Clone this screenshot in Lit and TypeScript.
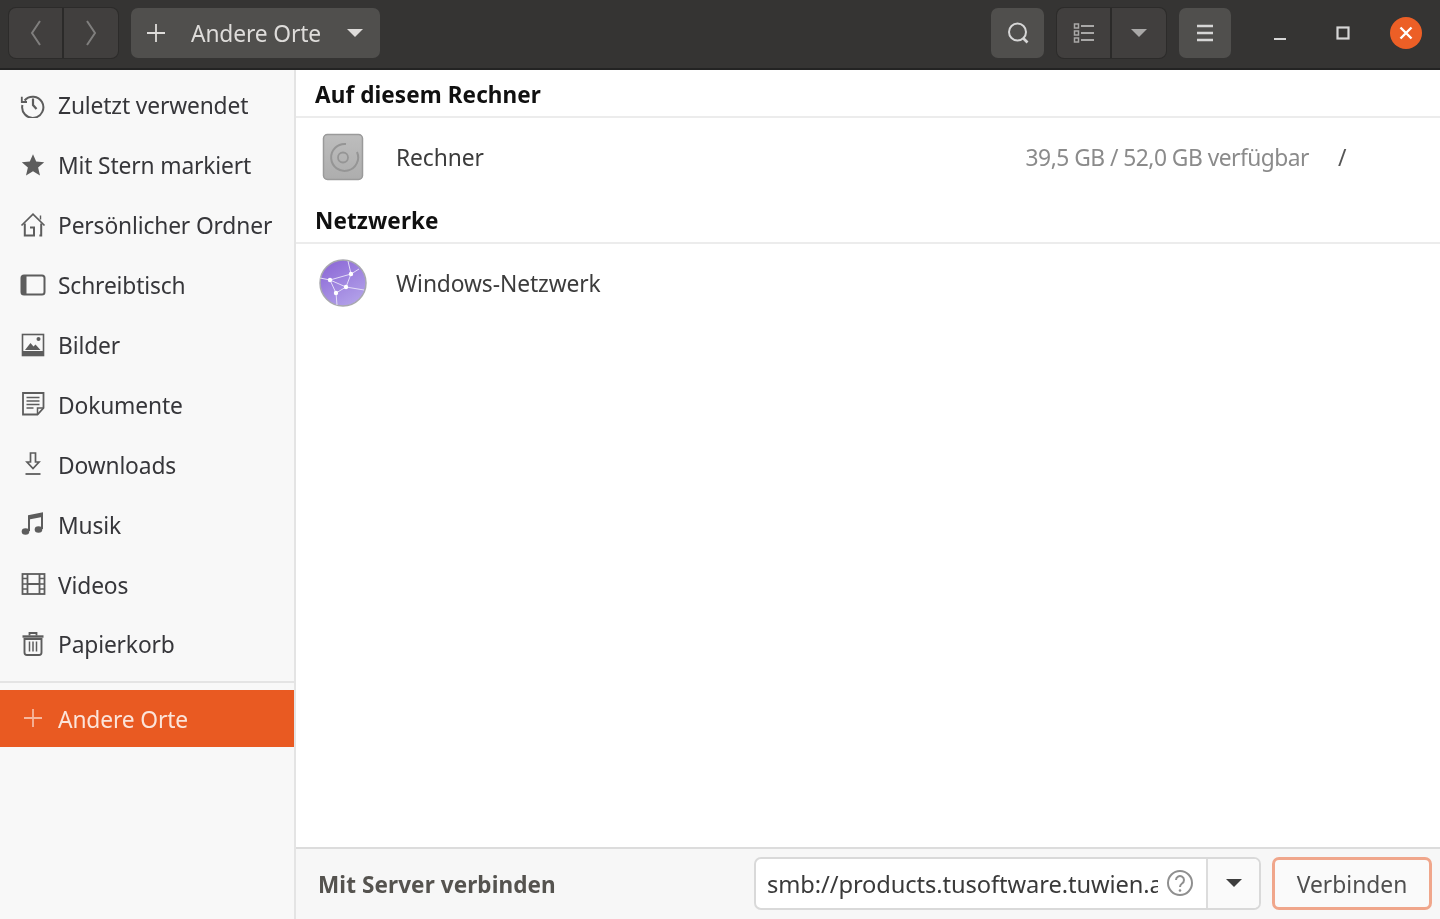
import { LitElement, html, css, svg } from "lit";
import { customElement } from "lit/decorators.js";

const ic = (body: unknown, cls = "") => html`<svg class="ic ${cls}" viewBox="0 0 26 26" fill="none" stroke="currentColor" stroke-width="2">${body}</svg>`;

const icons: Record<string, unknown> = {
  recent: svg`<path d="M4.6 8.500A10.600 10.600 0 1 1 2.400 13" /><path d="M1.800 4.800v5.200h5.200" stroke-width="1.800"/><path d="M13 6.500V13l3.500 4" stroke-width="2.200"/>`,
  star: svg`<path fill="currentColor" stroke="none" d="M13 2.200l3.200 7.400 8 .7-6.100 5.300 1.900 7.900L13 19.300l-7 4.200 1.900-7.900-6.100-5.300 8-.7z"/>`,
  home: svg`<path d="M1.500 13.500L13 2.200l11.500 11.300" stroke-width="1.700"/><path d="M4.800 11.500V23.500H14v-8h-4" stroke-width="2"/><path d="M21.200 11.500V23.500h-1.800" stroke-width="2"/><path d="M20.500 3.500v4" stroke-width="1.400"/>`,
  desktop: svg`<rect x="1.500" y="3.500" width="23" height="19" rx="2.500" stroke-width="2"/><path fill="currentColor" stroke="none" d="M1.500 6a2.500 2.500 0 0 1 2.500-2.500h2.500v19H4A2.500 2.500 0 0 1 1.500 20z"/>`,
  pictures: svg`<rect x="2.500" y="2.500" width="21" height="21" stroke-width="1.600"/><path fill="currentColor" stroke="none" d="M2 19h22V24H2z"/><path fill="currentColor" stroke="none" d="M5 18l5.500-7 3 3.500 2-2 5 5.500z"/><circle cx="18.500" cy="7" r="2" fill="currentColor" stroke="none"/>`,
  docs: svg`<path d="M3 2h20.500v15l-6 6.500H3z" stroke-width="1.800"/><path d="M17.500 23.500V17h6" stroke-width="1.500"/><path d="M6.500 6.500h13M6.500 10h13M6.500 13.500h13M6.500 17h7" stroke-width="1.500"/>`,
  downloads: svg`<path d="M10.500 2h5v9h3.500l-6 6.500-6-6.500h3.500z" stroke-width="1.700"/><path d="M5.500 23h15" stroke-width="1.800"/>`,
  music: svg`<path d="M9 20V5l13-2.500v15.500" stroke-width="2"/><path d="M9 5l13-2.500v3.500L9 8.500z" fill="currentColor" stroke="none"/><ellipse cx="5.500" cy="20.500" rx="3.800" ry="3.300" fill="currentColor" stroke="none"/><ellipse cx="18.500" cy="18.500" rx="3.800" ry="3.300" fill="currentColor" stroke="none"/>`,
  videos: svg`<rect x="2.500" y="3" width="22" height="20" stroke-width="1.800"/><path d="M7.500 3v20M19.500 3v20M7.500 13H19.500" stroke-width="1.800"/><path d="M2.500 7.500h5M2.500 13h5M2.500 18h5M19.500 7.500h5M19.500 13h5M19.500 18h5" stroke-width="1.700"/>`,
  trash: svg`<path d="M4.500 8h17V21.500a2.500 2.500 0 0 1-2.500 2.500H7a2.500 2.500 0 0 1-2.500-2.500z" stroke-width="1.900"/><path d="M2.500 5.500h21" stroke-width="2.400"/><path d="M9.500 4.500V2h7v2.500" stroke-width="1.800"/><path d="M9.500 10.500v10M13 10.500v10M16.500 10.500v10" stroke-width="1.500"/>`,
  plus: svg`<path d="M13 4v18M4 13h18" stroke-width="1.800"/>`,
};

const places = [
  ["recent", "Zuletzt verwendet"],
  ["star", "Mit Stern markiert"],
  ["home", "Persönlicher Ordner"],
  ["desktop", "Schreibtisch"],
  ["pictures", "Bilder"],
  ["docs", "Dokumente"],
  ["downloads", "Downloads"],
  ["music", "Musik"],
  ["videos", "Videos"],
  ["trash", "Papierkorb"],
];

@customElement("app-root")
export class AppRoot extends LitElement {
  static styles = css`
    :host {
      display: flex;
      flex-direction: column;
      width: 1440px;
      height: 919px;
      overflow: hidden;
      font-family: "Noto Sans", "Open Sans", sans-serif;
      font-size: 22.8px;
      color: #3d3d3d;
      background: #fff;
      filter: blur(0.45px);
    }
    .ic { width: 26px; height: 26px; flex: none; display: block; }

    .header {
      height: 70px;
      flex: none;
      box-sizing: border-box;
      display: flex;
      align-items: center;
      padding: 0 0 2px 9px;
      background: #353433;
      border-bottom: 2px solid #232323;
      color: #d6d6d6;
    }
    .group {
      display: flex;
      height: 50px;
      border-radius: 7px;
      background: #413f3e;
      box-shadow: 0 0 0 1px #2c2b2a;
      overflow: hidden;
    }
    .group > div { display: flex; align-items: center; justify-content: center; box-sizing: border-box; width: 54px; }
    .group > div:first-child { width: 55px; border-right: 2px solid #2b2a29; }
    .nav svg { width: 14px; height: 30px; color: #7f7e7d; }
    .path {
      margin-left: 13px;
      width: 249px;
      height: 50px;
      box-sizing: border-box;
      border-radius: 7px;
      background: #504f4d;
      display: flex;
      align-items: center;
      padding: 0 17px 0 12px;
      color: #dedcda;
    }
    .path .label { margin-left: 22px; flex: 1; letter-spacing: -0.15px; }
    .tri { width: 0; height: 0; border-left: 8px solid transparent; border-right: 8px solid transparent; border-top: 8px solid currentColor; flex: none; }
    .spacer { flex: 1; }
    .tool {
      width: 53px;
      height: 50px;
      border-radius: 7px;
      background: #504f4d;
      display: flex;
      align-items: center;
      justify-content: center;
    }
    .tool.menu { width: 52px; }
    .view { margin: 0 13px; }
    .view .list { color: #a9a8a7; }
    .view .tri { color: #a9a8a7; }
    .tool svg, .view svg { width: 26px; height: 26px; }
    .win { display: flex; align-items: center; margin-left: 17px; padding-right: 3px; }
    .win > div { width: 63px; height: 50px; display: flex; align-items: center; justify-content: center; }
    .close-dot {
      width: 32px;
      height: 32px;
      border-radius: 50%;
      background: #ec5f26;
      display: flex;
      align-items: center;
      justify-content: center;
      color: #fff;
    }
    .close-dot svg { width: 16px; height: 16px; }

    .body { flex: 1; display: flex; min-height: 0; }

    .sidebar {
      width: 296px;
      flex: none;
      box-sizing: border-box;
      background: #f8f8f8;
      border-right: 2px solid #e4e4e4;
      display: flex;
      flex-direction: column;
      padding-top: 5px;
    }
    .row {
      height: 59.900px;
      flex: none;
      display: flex;
      align-items: center;
      padding-left: 20px;
      gap: 12px;
      color: #36363a;
      letter-spacing: -0.15px;
    }
    .row > span { padding-top: 2px; }
    .row .ic { color: #5d5d5d; }
    .sep { height: 2px; background: #e4e4e4; margin-top: 7px; flex: none; }
    .row.active {
      margin-top: 7px;
      height: 57px;
      background: #e95a22;
      color: #fbe4da;
    }
    .row.active .ic { color: #f6b79e; }

    .main { flex: 1; display: flex; flex-direction: column; min-width: 0; background: #fff; }
    .section {
      height: 48px;
      flex: none;
      box-sizing: border-box;
      display: flex;
      align-items: center;
      padding: 2px 0 0 19px;
      font-size: 22.500px;
      font-weight: 700;
      color: #101010;
      border-bottom: 2px solid #ececec;
      letter-spacing: 0.1px;
    }
    .place {
      height: 78px;
      flex: none;
      display: flex;
      align-items: center;
      padding-left: 23px;
      color: #3c3c3c;
    }
    .place svg { width: 48px; height: 48px; flex: none; }
    .place .name { margin-left: 29px; flex: 1; letter-spacing: -0.1px; }
    .place .free { color: #8b8b8b; letter-spacing: -0.52px; }
    .place .mount { color: #555; width: 131px; padding-left: 29px; box-sizing: border-box; }
    .fill { flex: 1; }

    .connect {
      height: 72px;
      flex: none;
      box-sizing: border-box;
      background: #f7f7f7;
      border-top: 2px solid #dcdcdc;
      display: flex;
      align-items: center;
      padding: 0 8px 2px 22px;
    }
    .connect .title { padding-top: 2px; font-size: 22.500px; font-weight: 700; color: #55534f; flex: 1; letter-spacing: 0.1px; }
    .entry {
      width: 507px;
      height: 53px;
      box-sizing: border-box;
      display: flex;
      border: 2px solid #d9d9d9;
      border-radius: 7px;
      background: #fff;
      overflow: hidden;
    }
    .entry .text {
      flex: 1;
      min-width: 0;
      display: flex;
      align-items: center;
      padding-left: 11px;
      color: #3a3a3a;
    }
    .entry .val { padding-top: 2px; width: 391px; overflow: hidden; white-space: nowrap; flex: none; font-size: 23.700px; letter-spacing: -0.1px; }
    .entry svg { margin-left: 8px; width: 28px; height: 28px; color: #8f8f8f; flex: none; }
    .entry .drop {
      width: 53px;
      flex: none;
      box-sizing: border-box;
      background: #fafafa;
      border-left: 2px solid #dcdcdc;
      display: flex;
      align-items: center;
      justify-content: center;
      color: #3d3d3d;
    }
    .btn {
      margin-left: 11px;
      width: 160px;
      height: 53px;
      box-sizing: border-box;
      border: 3px solid #f0a68b;
      border-radius: 7px;
      padding-top: 2px;
      background: #fafafa;
      display: flex;
      align-items: center;
      justify-content: center;
      color: #4f4f4f;
    }
  `;

  render() {
    return html`
      <div class="header">
        <div class="group nav">
          <div><svg viewBox="0 0 14 30" fill="none" stroke="currentColor" stroke-width="2"><path d="M11 3L3 15l8 12"/></svg></div>
          <div><svg viewBox="0 0 14 30" fill="none" stroke="currentColor" stroke-width="2"><path d="M3 3l8 12-8 12"/></svg></div>
        </div>
        <div class="path">
          ${ic(icons.plus)}
          <span class="label">Andere Orte</span>
          <span class="tri"></span>
        </div>
        <div class="spacer"></div>
        <div class="tool">
          <svg viewBox="0 0 26 26" fill="none" stroke="currentColor" stroke-width="2"><circle cx="12.500" cy="12" r="8.500"/><path d="M18.500 18.500l4 4" stroke-width="2.600"/></svg>
        </div>
        <div class="group view">
          <div class="list"><svg viewBox="0 0 26 26" fill="none" stroke="currentColor" stroke-width="1.800"><path d="M3.500 4h4v4h-4zM3.500 11h4v4h-4zM3.500 18h4v4h-4z" stroke-width="1.500"/><path d="M10 6H23M10 13H23M10 20H23"/></svg></div>
          <div><span class="tri"></span></div>
        </div>
        <div class="tool menu">
          <svg viewBox="0 0 26 26" fill="none" stroke="currentColor" stroke-width="2.400"><path d="M5 6h16M5 13h16M5 20h16"/></svg>
        </div>
        <div class="win">
          <div><svg class="ic" viewBox="0 0 26 26" fill="none" stroke="currentColor" stroke-width="2"><path d="M7 19h12"/></svg></div>
          <div><svg class="ic" viewBox="0 0 26 26" fill="none" stroke="currentColor" stroke-width="2.200"><rect x="7.500" y="7.500" width="11" height="11"/></svg></div>
          <div><span class="close-dot"><svg viewBox="0 0 16 16" fill="none" stroke="currentColor" stroke-width="2.400"><path d="M2.500 2.500l11 11M13.500 2.500l-11 11"/></svg></span></div>
        </div>
      </div>
      <div class="body">
        <div class="sidebar">
          ${places.map(([i, t]) => html`<div class="row">${ic(icons[i])}<span>${t}</span></div>`)}
          <div class="sep"></div>
          <div class="row active">${ic(icons.plus)}<span>Andere Orte</span></div>
        </div>
        <div class="main">
          <div class="section">Auf diesem Rechner</div>
          <div class="place">
            <svg viewBox="0 0 48 48">
              <defs><linearGradient id="d" x1="0" y1="0" x2="0" y2="1"><stop offset="0" stop-color="#bdbdbd"/><stop offset="1" stop-color="#adadad"/></linearGradient></defs>
              <rect x="4.500" y="1.500" width="39" height="45" rx="4" fill="url(#d)" stroke="#9a9a9a" stroke-width="1.500"/>
              <path d="M27 11a13.500 13.500 0 1 0 11 8" fill="none" stroke="#959595" stroke-width="2"/>
              <circle cx="24" cy="24.500" r="5" fill="none" stroke="#959595" stroke-width="1.800"/>
            </svg>
            <span class="name">Rechner</span>
            <span class="free">39,5 GB / 52,0 GB verfügbar</span>
            <span class="mount">/</span>
          </div>
          <div class="section">Netzwerke</div>
          <div class="place">
            <svg viewBox="0 0 48 48">
              <defs><linearGradient id="g" x1="0.200" y1="0" x2="0.800" y2="1"><stop offset="0" stop-color="#8c68d6"/><stop offset="1" stop-color="#b4a4ea"/></linearGradient></defs>
              <circle cx="24" cy="24" r="23" fill="url(#g)" stroke="#a8a8ae" stroke-width="1.500"/>
              <g fill="none" stroke="#e4ddf7" stroke-width="1">
                <path d="M11 21l21-6M11 21l16 7M32 15l-5 13M27 28l-10 6M11 21l6 13M32 15l8-5M27 28l18 3M17 34l1 12M11 21l-10-2M32 15l-3-13"/>
              </g>
              <g fill="#fff"><circle cx="32" cy="15" r="2.200"/><circle cx="11" cy="21" r="2.200"/><circle cx="27" cy="28" r="2.200"/><circle cx="17" cy="34" r="2.200"/></g>
            </svg>
            <span class="name">Windows-Netzwerk</span>
          </div>
          <div class="fill"></div>
          <div class="connect">
            <span class="title">Mit Server verbinden</span>
            <div class="entry">
              <div class="text">
                <span class="val">smb://products.tusoftware.tuwien.ac.at</span>
                <svg viewBox="0 0 28 28" fill="none" stroke="currentColor" stroke-width="2"><circle cx="14" cy="14" r="12"/><path d="M10 11a4 4 0 1 1 6 3.500c-1.500 1-2 1.500-2 3.500" /><circle cx="14" cy="21.500" r="1.300" fill="currentColor" stroke="none"/></svg>
              </div>
              <div class="drop"><span class="tri"></span></div>
            </div>
            <div class="btn">Verbinden</div>
          </div>
        </div>
      </div>
    `;
  }
}
